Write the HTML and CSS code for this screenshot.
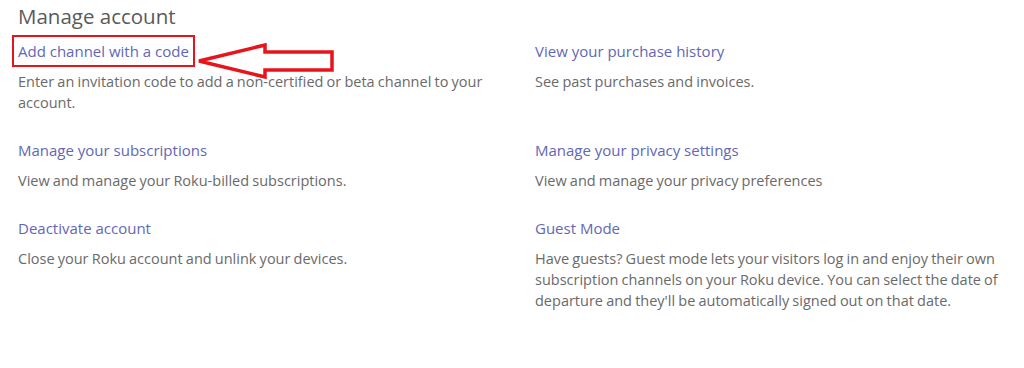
FILE: index.html
```html
<!DOCTYPE html>
<html lang="en">

<head>
    <meta charset="UTF-8">
    <meta name="viewport" content="width=device-width, initial-scale=1.0">
    <title>Manage account</title>
    <link rel="stylesheet" href="styles.css">
</head>

<body>
    <div class="page">
        <h1 class="title">Manage account</h1>

        <div class="grid">
            <div class="item">
                <a href="#" class="link highlight">Add channel with a code</a>
                <p>Enter an invitation code to add a non-certified or beta channel to your account.</p>
            </div>
            <div class="item">
                <a href="#" class="link">View your purchase history</a>
                <p>See past purchases and invoices.</p>
            </div>
            <div class="item">
                <a href="#" class="link">Manage your subscriptions</a>
                <p>View and manage your Roku-billed subscriptions.</p>
            </div>
            <div class="item">
                <a href="#" class="link">Manage your privacy settings</a>
                <p>View and manage your privacy preferences</p>
            </div>
            <div class="item">
                <a href="#" class="link">Deactivate account</a>
                <p>Close your Roku account and unlink your devices.</p>
            </div>
            <div class="item">
                <a href="#" class="link">Guest Mode</a>
                <p>Have guests? Guest mode lets your visitors log in and enjoy their own subscription channels on your Roku device. You can select the date of departure and they'll be automatically signed out on that date.</p>
            </div>
        </div>
    </div>

    <!-- annotation arrow pointing at the highlighted link -->
    <svg class="arrow" width="140" height="40" viewBox="0 0 140 40">
        <path d="M2 18 L68 2 L68 9 L135 9 L135 27 L68 27 L68 34 Z" fill="none" stroke="#e8141c" stroke-width="3.5" stroke-linejoin="miter" />
    </svg>
</body>

</html>
```

FILE: styles.css
```css
* {
    margin: 0;
    padding: 0;
    box-sizing: border-box;
}

body {
    font-family: 'Open Sans', 'Liberation Sans', sans-serif;
    background: #fff;
    color: #6a6a6a;
    position: relative;
}

.page {
    padding: 2px 0 0 18px;
}

.title {
    font-size: 20.5px;
    font-weight: 400;
    color: #5a5a5a;
    line-height: 28px;
    margin-bottom: 11px;
}

.grid {
    display: grid;
    grid-template-columns: 517px 1fr;
    row-gap: 27px;
}

.item {
    font-size: 14.5px;
}

.link {
    display: inline-block;
    font-size: 15px;
    color: #6267b5;
    text-decoration: none;
    line-height: 20px;
    margin-bottom: 10px;
}

.highlight {
    outline: 2.5px solid #e8141c;
    outline-offset: 4px;
}

.item p {
    line-height: 21px;
    max-width: 489px;
    word-spacing: -0.6px;
}

.arrow {
    position: absolute;
    left: 197px;
    top: 43px;
}
```
